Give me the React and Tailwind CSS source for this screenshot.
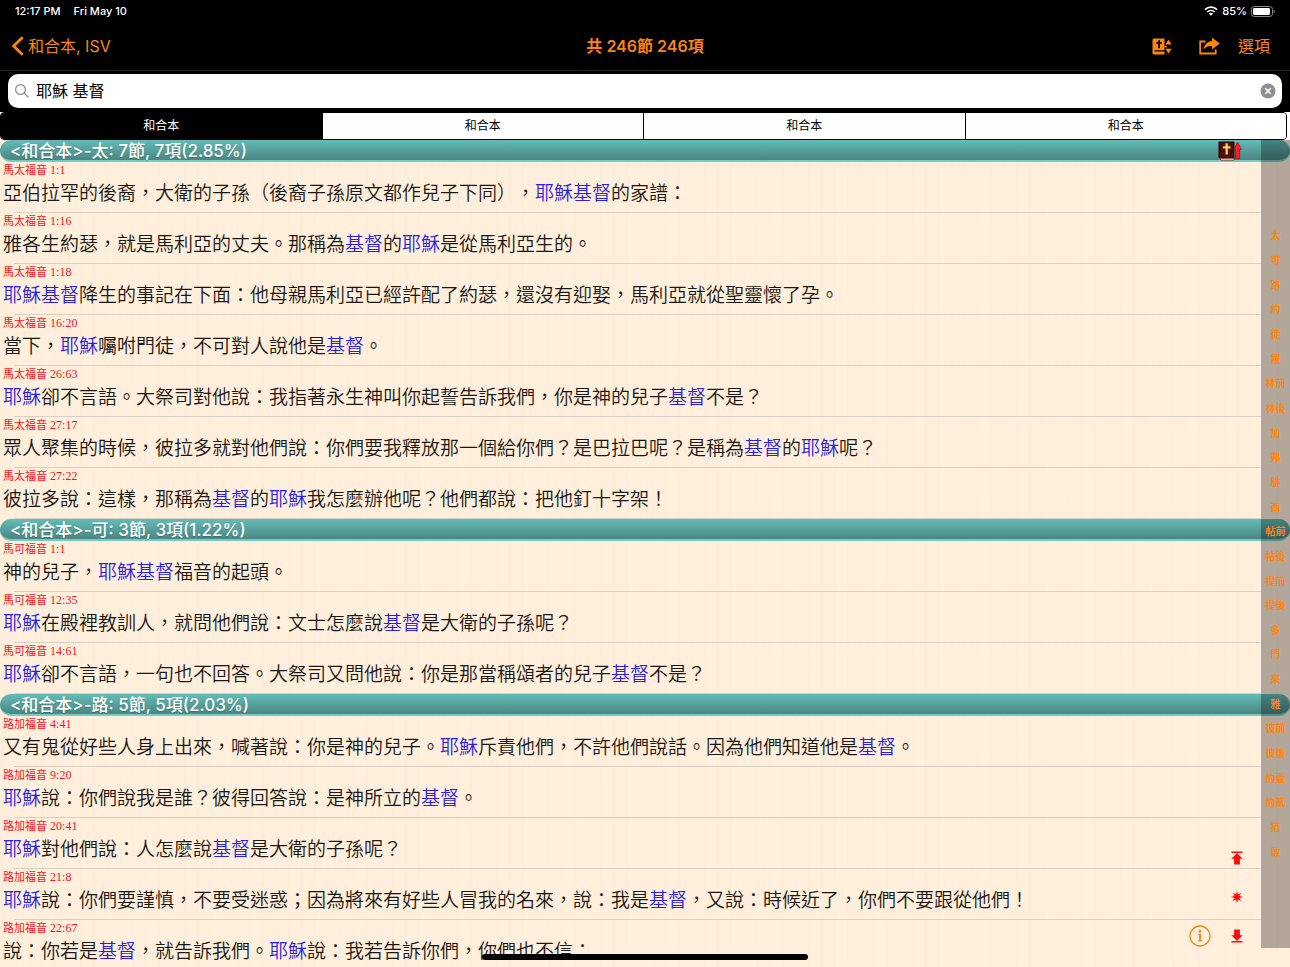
import { useState } from 'react';

const VERSIONS = ['和合本', '和合本', '和合本', '和合本'];

// *…* marks a search hit inside a verse
const SECTIONS = [
  {
    title: '<和合本>-太: 7節, 7項(2.85%)',
    book: '馬太福音',
    verses: [
      { no: '1:1', text: '亞伯拉罕的後裔，大衛的子孫（後裔子孫原文都作兒子下同），*耶穌基督*的家譜：' },
      { no: '1:16', text: '雅各生約瑟，就是馬利亞的丈夫。那稱為*基督*的*耶穌*是從馬利亞生的。' },
      { no: '1:18', text: '*耶穌基督*降生的事記在下面：他母親馬利亞已經許配了約瑟，還沒有迎娶，馬利亞就從聖靈懷了孕。' },
      { no: '16:20', text: '當下，*耶穌*囑咐門徒，不可對人說他是*基督*。' },
      { no: '26:63', text: '*耶穌*卻不言語。大祭司對他說：我指著永生神叫你起誓告訴我們，你是神的兒子*基督*不是？' },
      { no: '27:17', text: '眾人聚集的時候，彼拉多就對他們說：你們要我釋放那一個給你們？是巴拉巴呢？是稱為*基督*的*耶穌*呢？' },
      { no: '27:22', text: '彼拉多說：這樣，那稱為*基督*的*耶穌*我怎麼辦他呢？他們都說：把他釘十字架！' },
    ],
  },
  {
    title: '<和合本>-可: 3節, 3項(1.22%)',
    book: '馬可福音',
    verses: [
      { no: '1:1', text: '神的兒子，*耶穌基督*福音的起頭。' },
      { no: '12:35', text: '*耶穌*在殿裡教訓人，就問他們說：文士怎麼說*基督*是大衛的子孫呢？' },
      { no: '14:61', text: '*耶穌*卻不言語，一句也不回答。大祭司又問他說：你是那當稱頌者的兒子*基督*不是？' },
    ],
  },
  {
    title: '<和合本>-路: 5節, 5項(2.03%)',
    book: '路加福音',
    verses: [
      { no: '4:41', text: '又有鬼從好些人身上出來，喊著說：你是神的兒子。*耶穌*斥責他們，不許他們說話。因為他們知道他是*基督*。' },
      { no: '9:20', text: '*耶穌*說：你們說我是誰？彼得回答說：是神所立的*基督*。' },
      { no: '20:41', text: '*耶穌*對他們說：人怎麼說*基督*是大衛的子孫呢？' },
      { no: '21:8', text: '*耶穌*說：你們要謹慎，不要受迷惑；因為將來有好些人冒我的名來，說：我是*基督*，又說：時候近了，你們不要跟從他們！' },
      { no: '22:67', text: '說：你若是*基督*，就告訴我們。*耶穌*說：我若告訴你們，你們也不信：' },
    ],
  },
];

const BOOK_INDEX = [
  '太', '可', '路', '約', '徒', '羅', '林前', '林後', '加', '弗', '腓', '西', '帖前',
  '帖後', '提前', '提後', '多', '門', '來', '雅', '彼前', '彼後', '約壹', '約貳', '猶', '啟',
];

function StatusBar() {
  return (
    <div className="flex h-[22px] items-center justify-between px-[15px] text-[11px] font-medium text-white">
      <div className="flex gap-[13px]">
        <span>12:17 PM</span>
        <span>Fri May 10</span>
      </div>
      <div className="flex items-center gap-1">
        <svg className="h-[10px] w-[14px]" viewBox="0 0 14 10" fill="none" stroke="white" strokeWidth="1.7">
          <path d="M1 3.6a8.6 8.6 0 0 1 12 0" />
          <path d="M3.2 6a5.5 5.5 0 0 1 7.6 0" />
          <path d="M7 9.8 4.9 7.7a3 3 0 0 1 4.2 0z" fill="white" stroke="none" />
        </svg>
        <span>85%</span>
        <svg className="h-[11px] w-6" viewBox="0 0 24 11">
          <rect x="0.5" y="0.5" width="21" height="10" rx="2.8" fill="none" stroke="#8a8a8a" />
          <rect x="2" y="2" width="17" height="7" rx="1.4" fill="white" />
          <path d="M22.6 3.7c1.6.6 1.6 3 0 3.6z" fill="#8a8a8a" />
        </svg>
      </div>
    </div>
  );
}

function NavBar() {
  return (
    <div className="grid h-12 grid-cols-[1fr_auto_1fr] items-center px-[11px] text-base text-[#f98511]">
      <button className="flex items-center gap-1 justify-self-start">
        <svg className="h-5 w-[13px]" viewBox="0 0 13 20" fill="none" stroke="currentColor" strokeWidth="2.8">
          <path d="M11.7 1.2 2.6 10l9.1 8.8" />
        </svg>
        <span>和合本, ISV</span>
      </button>
      <h1 className="font-semibold">共 246節 246項</h1>
      <div className="flex items-center justify-self-end pr-[9px]">
        <button aria-label="切換版本" className="mr-[27px]">
          <svg className="h-[17px] w-5" viewBox="0 0 20 17" fill="currentColor">
            <path
              fillRule="evenodd"
              d="M2 .5h10.500v11.800H3c-1 0-1 1.300 0 1.300h9.500v2.900H2.200C1.100 16.500.5 15.800.5 14.800V2C.5 1.100 1.100.5 2 .5zM6.200 2.300v1.800H4.300v1.700h1.900v4.400H8V5.800h1.900V4.100H8V2.300z"
            />
            <path d="M16.500 1.400 19.600 6.500h-6.200zM16.500 15.800 19.600 10.700h-6.200z" />
            <path d="M12.500 7.900h2.300v1.500h-2.300z" />
          </svg>
        </button>
        <button aria-label="分享" className="mr-[18px]">
          <svg className="h-[18px] w-[21px]" viewBox="0 0 21 18" fill="currentColor">
            <path d="M13 .5 20.800 6.500 13 12.500V9C9.300 8.800 6.700 9.800 4.600 12.600 5.100 8.100 8 4.500 13 4z" />
            <path d="M6.500 4.500H1.200v12h15.500v-4" fill="none" stroke="currentColor" strokeWidth="1.800" />
          </svg>
        </button>
        <button>選項</button>
      </div>
    </div>
  );
}

function SearchBar({ query, onChange }) {
  return (
    <div className="border-t border-[#222] px-2 pb-1 pt-[3px]">
      <label className="flex h-[34px] items-center gap-[6px] rounded-[10px] bg-white px-[6px]">
        <svg className="h-4 w-4 shrink-0" viewBox="0 0 16 16" fill="none" stroke="#8e8e93" strokeWidth="1.2">
          <circle cx="6.5" cy="6.5" r="4.9" />
          <path d="m10.1 10.1 4.400 4.400" />
        </svg>
        <input
          aria-label="搜尋"
          value={query}
          onChange={e => onChange(e.target.value)}
          className="min-w-0 flex-1 bg-transparent text-base text-black outline-none"
        />
        <button aria-label="清除" onClick={() => onChange('')}>
          <svg className="h-4 w-4" viewBox="0 0 16 16">
            <circle cx="8" cy="8" r="7.5" fill="#8e8e93" />
            <path d="m5.3 5.3 5.400 5.400M10.700 5.300l-5.400 5.400" stroke="white" strokeWidth="1.6" />
          </svg>
        </button>
      </label>
    </div>
  );
}

function VersionTabs({ active, onSelect }) {
  return (
    <div className="bg-white pr-[3px]">
      <div className="flex h-7 divide-x divide-black overflow-hidden rounded border border-black">
        {VERSIONS.map((name, i) => (
          <button
            key={i}
            onClick={() => onSelect(i)}
            className={`flex-1 text-xs ${i === active ? 'bg-black text-white' : 'bg-white text-black'}`}
          >
            {name}
          </button>
        ))}
      </div>
    </div>
  );
}

function Verse({ book, no, text }) {
  return (
    <li className="flex h-[51px] flex-col pl-[3px] pr-[29px]">
      <p className="h-4 text-[11px] leading-4 text-[#f5141c]">
        {book} <span className="font-['Liberation_Serif',serif] text-xs leading-4">{no}</span>
      </p>
      <p className="whitespace-nowrap text-[19px] font-[350] leading-8 text-[#1a1712] [text-spacing-trim:space-all]">
        {text.split('*').map((part, i) => (
          i % 2 ? <span key={i} className="text-[#2a1fe0]">{part}</span> : part
        ))}
      </p>
      <div className="ml-[11px] mt-auto border-b border-[#d9d0c4]" />
    </li>
  );
}

function BookIndex() {
  return (
    <nav className="absolute bottom-[19px] right-0 top-0 flex w-[29px] items-center bg-black/30">
      <div className="flex h-[641px] w-full flex-col text-center text-[10px] font-bold text-[#ff8610]">
        {BOOK_INDEX.map(name => (
          <a key={name} href={`#${name}`} className="flex flex-1 items-center justify-center">{name}</a>
        ))}
      </div>
    </nav>
  );
}

function FloatingTools() {
  return (
    <>
      <button aria-label="上一卷" className="absolute right-12 top-0">
        <svg className="h-[22px] w-6" viewBox="0 0 24 22">
          <path d="M1 2h15v16.500H2.500L1 17.500z" fill="#4a0f0c" stroke="#210504" />
          <path d="M2 18.300h14v1.900H2.800z" fill="#f6e8df" stroke="#6b1510" strokeWidth="0.7" />
          <path d="M7.500 3.300h2.400v2.900h2.600v2.200H9.900v6H7.500v-6H4.900V6.200h2.600z" fill="#f9d766" stroke="#a46a16" strokeWidth="0.4" />
          <path d="M19.600 2 23.500 9.500h-1.900V19h-4V9.500h-1.900z" fill="#f3202b" stroke="#a30c12" strokeWidth="0.7" />
        </svg>
      </button>
      <div className="absolute bottom-5 right-[46px] flex items-end gap-[19px]">
        <button aria-label="說明">
          <svg className="h-[22px] w-[22px]" viewBox="0 0 22 22" fill="none" stroke="#e8891c" strokeWidth="1.3">
            <circle cx="11" cy="11" r="10" />
            <circle cx="11" cy="6.300" r="1.4" fill="#e8891c" stroke="none" />
            <path d="M9 9.300h2.600" strokeWidth="1.1" />
            <path d="M11.100 9v6.800" strokeWidth="2" />
            <path d="M8.800 15.800h4.800" strokeWidth="1.1" />
          </svg>
        </button>
        <div className="flex flex-col items-center gap-[25px] pb-1 text-[#fa0d0d]">
          <button aria-label="到頂部">
            <svg className="h-[14px] w-[14px]" viewBox="0 0 14 14" fill="currentColor">
              <path d="M1.500.500h11V2h-11zM7 2l5.600 5.800H9.900v5.700H4.100V7.800H1.400z" />
            </svg>
          </button>
          <button aria-label="目前位置">
            <svg className="h-[14px] w-[14px]" viewBox="0 0 14 14" fill="currentColor">
              <path d="m7 .8 1 3.800 3.300-1.900-1.900 3.300 3.800 1-3.800 1 1.900 3.300L8 9.400l-1 3.800-1-3.800-3.300 1.900L4.600 8l-3.800-1 3.800-1-1.900-3.300L6 4.600z" />
            </svg>
          </button>
          <button aria-label="到底部">
            <svg className="h-[14px] w-[14px]" viewBox="0 0 14 14" fill="currentColor">
              <path d="M1.500 12h11v1.500h-11zM7 12 1.400 6.200h2.700V.5h5.800v5.700h2.700z" />
            </svg>
          </button>
        </div>
      </div>
    </>
  );
}

export default function App() {
  const [query, setQuery] = useState('耶穌 基督');
  const [active, setActive] = useState(0);

  return (
    <div className="relative flex h-screen flex-col overflow-hidden bg-[#ffefdc] font-['Inter','Noto_Sans_CJK_TC',sans-serif]">
      <header className="shrink-0 bg-black">
        <StatusBar />
        <NavBar />
        <SearchBar query={query} onChange={setQuery} />
        <VersionTabs active={active} onSelect={setActive} />
      </header>

      <main className="relative min-h-0 flex-1">
        {/* Faint wood grain behind the verses */}
        <div className="h-full overflow-hidden bg-[repeating-linear-gradient(90deg,#fff0de_0px,#feedd9_3px,#fff0de_6px,#ffeedb_10px,#fff0de_13px)]">
          {SECTIONS.map(section => (
            <section key={section.title}>
              <h2 className="h-[22px] rounded-full border-b-2 border-[#74cdc5] bg-linear-to-b from-[#62bdb8] to-[#4c8681] pl-[10px] text-[17px] font-medium leading-[22px] text-white text-shadow-xs">
                {section.title}
              </h2>
              <ul>
                {section.verses.map(v => (
                  <Verse key={v.no} book={section.book} no={v.no} text={v.text} />
                ))}
              </ul>
            </section>
          ))}
        </div>
        <BookIndex />
        <FloatingTools />
      </main>

      {/* Home indicator */}
      <div className="absolute bottom-[7px] left-1/2 h-[6px] w-[326px] -translate-x-1/2 rounded-full bg-black" />
    </div>
  );
}
